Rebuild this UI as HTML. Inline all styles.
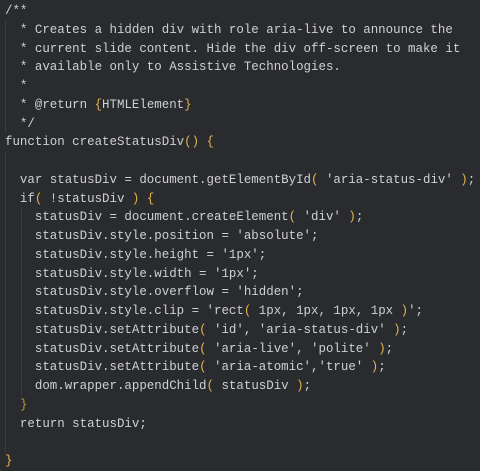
<!DOCTYPE html><html><head><style>
body{margin:0;background:#2a2b2f;width:480px;height:470px;overflow:hidden;position:relative}
pre{margin:0;position:absolute;left:5px;top:2px;font-family:"Liberation Mono",monospace;font-size:12.45px;line-height:18.75px;color:#cfd0d2;white-space:pre}
.y{color:#e2b34b}.o{color:#c8913a}
.g{position:absolute;width:1px;background:#3a3b40}
</style></head><body>
<div class="g" style="left:5px;top:21px;height:112px"></div>
<div class="g" style="left:5px;top:152px;height:300px"></div>
<div class="g" style="left:21px;top:208px;height:188px"></div>
<pre>/**
  * Creates a hidden div with role aria-live to announce the
  * current slide content. Hide the div off-screen to make it
  * available only to Assistive Technologies.
  *
  * @return <span class="y">{</span>HTMLElement<span class="y">}</span>
  */
function createStatusDiv<span class="y">()</span> <span class="y">{</span>

  var statusDiv = document.getElementById<span class="y">(</span> 'aria-status-div' <span class="y">)</span>;
  if<span class="y">(</span> !statusDiv <span class="y">)</span> <span class="y">{</span>
    statusDiv = document.createElement<span class="y">(</span> 'div' <span class="y">)</span>;
    statusDiv.style.position = 'absolute';
    statusDiv.style.height = '1px';
    statusDiv.style.width = '1px';
    statusDiv.style.overflow = 'hidden';
    statusDiv.style.clip = 'rect<span class="y">(</span> 1px, 1px, 1px, 1px <span class="y">)</span>';
    statusDiv.setAttribute<span class="y">(</span> 'id', 'aria-status-div' <span class="y">)</span>;
    statusDiv.setAttribute<span class="y">(</span> 'aria-live', 'polite' <span class="y">)</span>;
    statusDiv.setAttribute<span class="y">(</span> 'aria-atomic','true' <span class="y">)</span>;
    dom.wrapper.appendChild<span class="y">(</span> statusDiv <span class="y">)</span>;
  <span class="o">}</span>
  return statusDiv;

<span class="y">}</span></pre>
</body></html>
